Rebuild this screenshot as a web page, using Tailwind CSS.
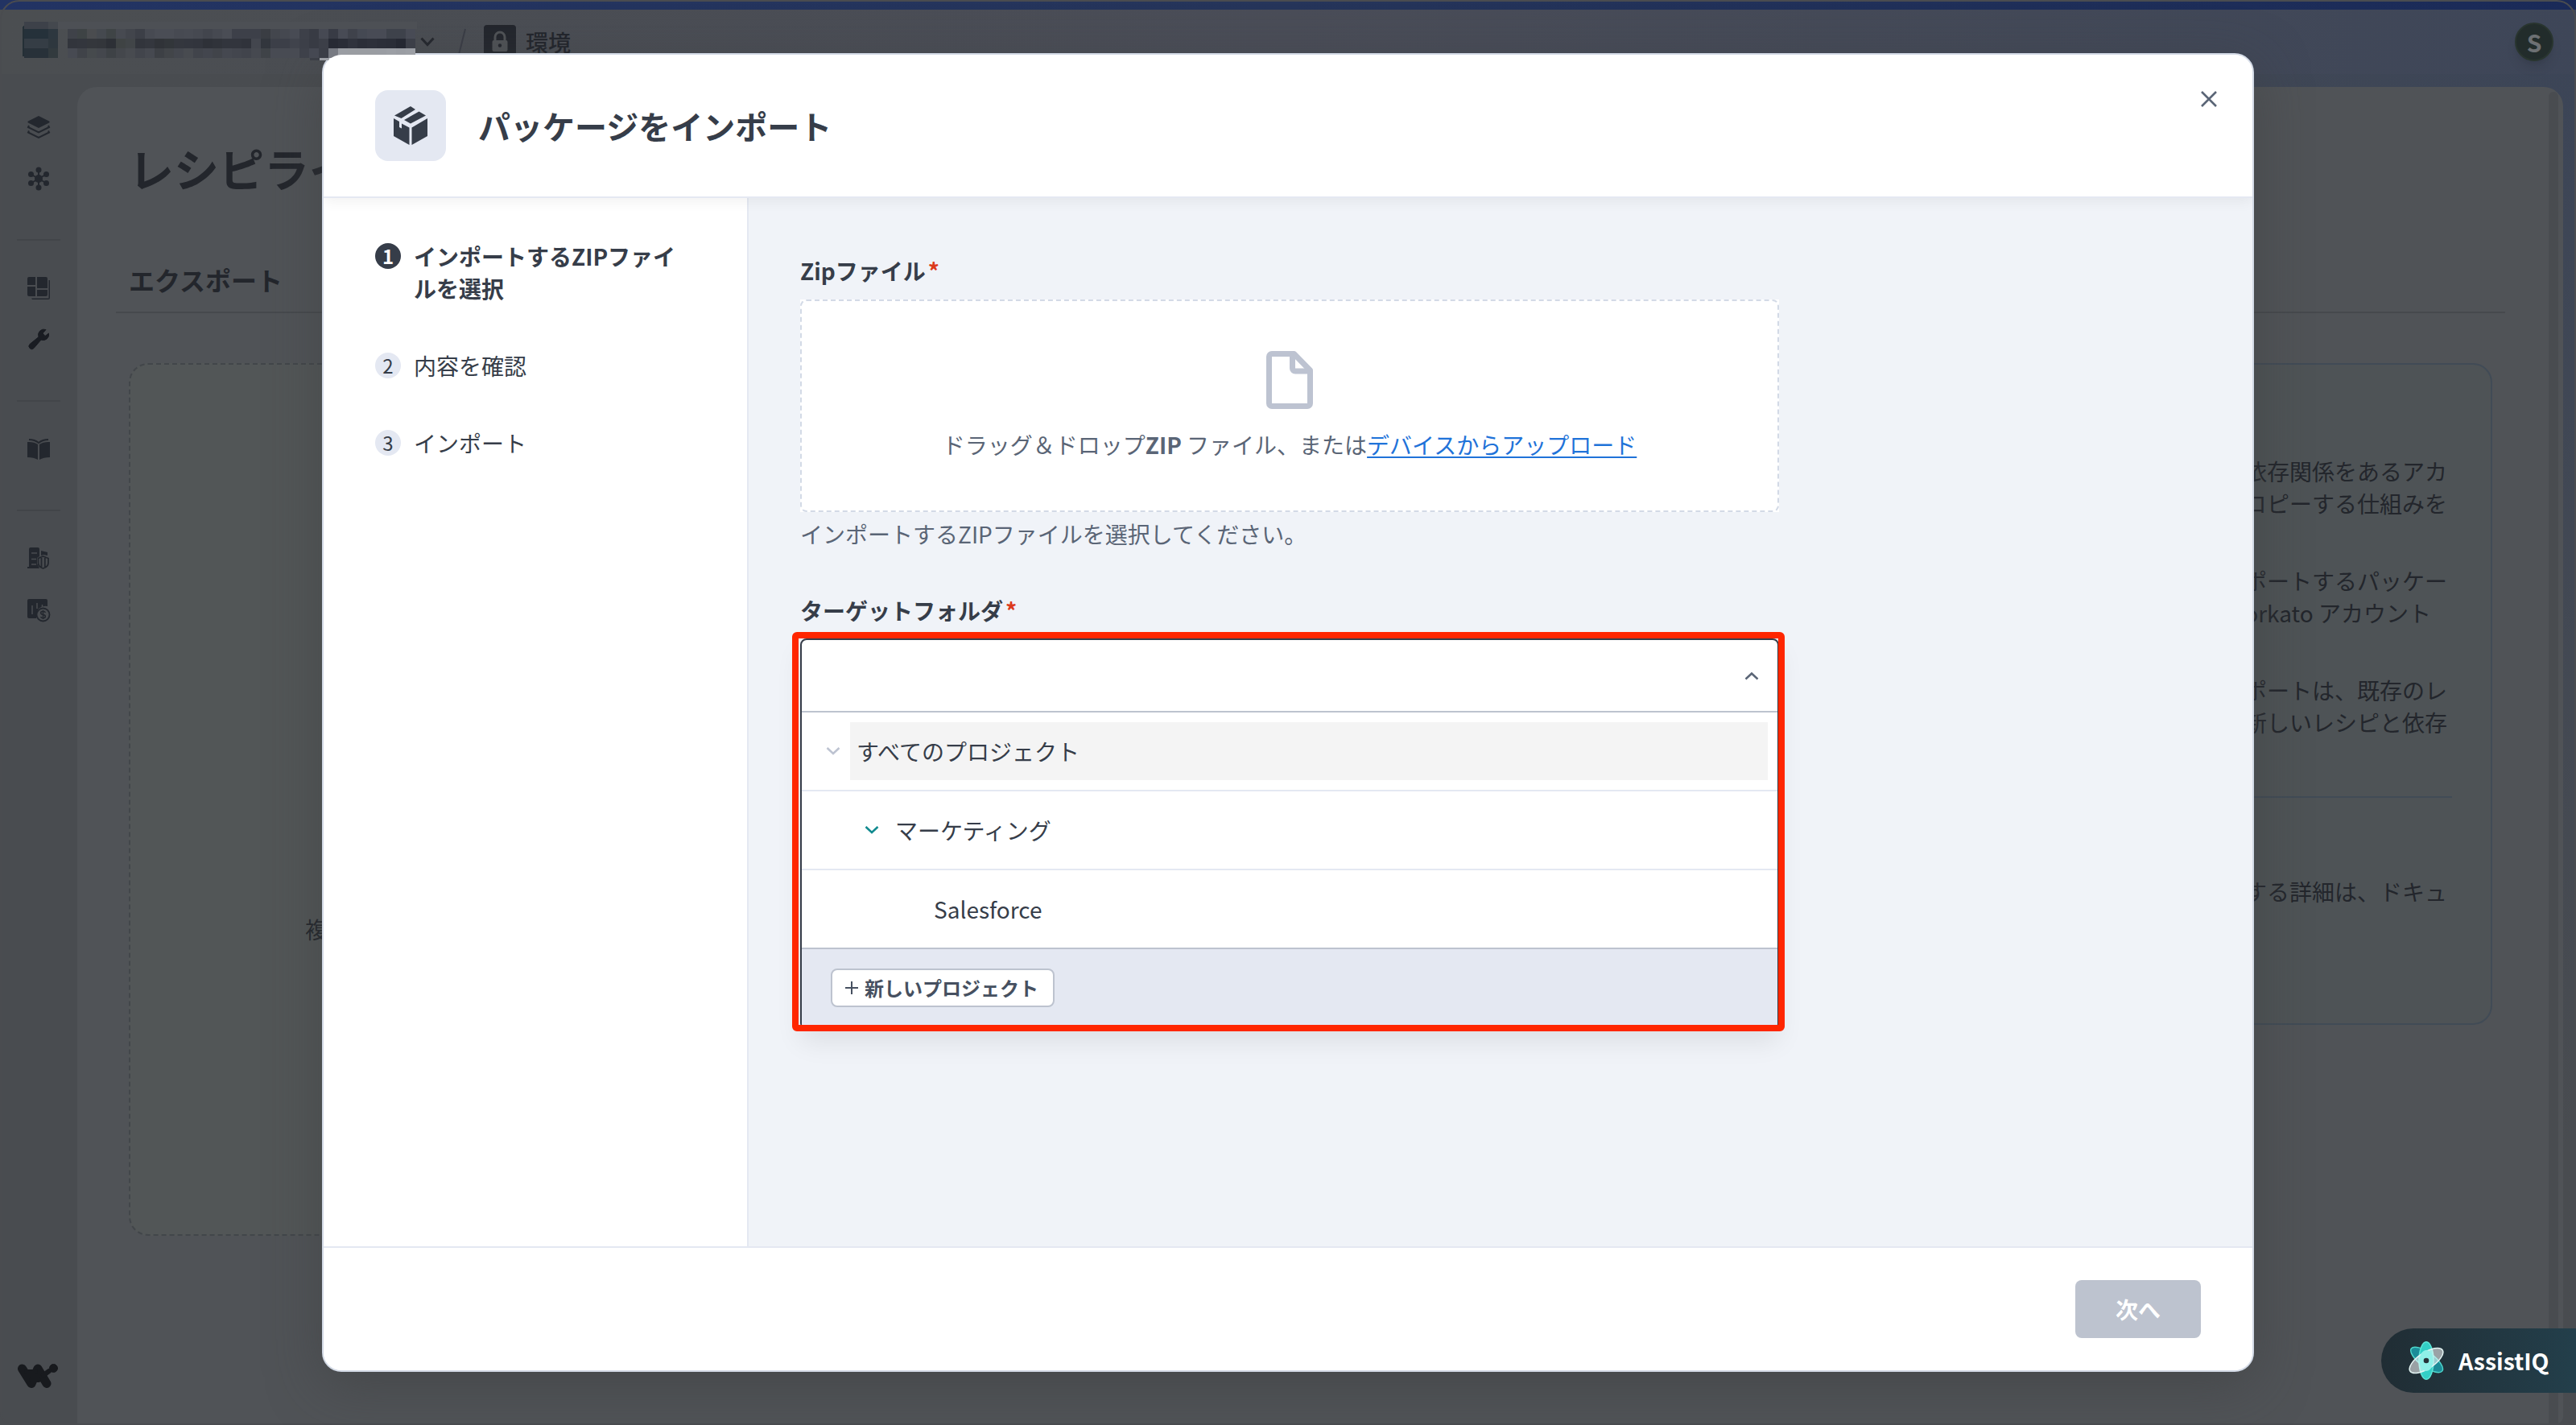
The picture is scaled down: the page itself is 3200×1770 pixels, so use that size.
<!DOCTYPE html>
<html lang="ja">
<head>
  <meta charset="UTF-8" />
  <meta name="viewport" content="width=device-width, initial-scale=1.0"/>
  <title>パッケージをインポート</title>
  <script src="https://cdn.jsdelivr.net/npm/@tailwindcss/browser@4"></script>
  <style>
    body {
      font-family: 'Noto Sans CJK JP', 'Noto Sans', sans-serif;
    }
  </style>
</head>
<body class="relative w-[3200px] h-[1770px] overflow-hidden bg-[#494c50] text-[#363d49] text-[28px] leading-[40px]">

  <!-- Page behind the dialog -->
  <div class="w-full h-full flex flex-col bg-linear-to-r from-[#494c50] from-50% to-[#3c4557]">
    <div class="h-3 shrink-0 bg-linear-to-r from-[#223363] via-[#26355a] to-[#1a2a58]"></div>

    <header class="h-20 shrink-0 flex items-center pl-[522px] pr-7 bg-linear-to-r from-[#4b4e51] via-[#4a4d58] to-[#3e4658] text-[#22252c]">
      <svg class="w-[18px] h-3" viewBox="0 0 18 12" fill="none" stroke="#24272e" stroke-width="3"><path d="M1.5 1.5 9 9.5l7.500-8"/></svg>
      <svg class="ml-7 w-3 h-10" viewBox="0 0 12 40" stroke="#3a3d46" stroke-width="2"><path d="M10 4 1 40"/></svg>
      <div class="ml-[21px] w-10 h-[42px] rounded bg-[#23262d] flex items-center justify-center">
        <svg class="w-6 h-7" viewBox="0 0 24 28"><path d="M6 12V8a6 6 0 0 1 12 0v4" fill="none" stroke="#505357" stroke-width="3"/><rect x="2.500" y="12" width="19" height="14" rx="2" fill="#505357"/><circle cx="12" cy="18.500" r="2.200" fill="#23262d"/></svg>
      </div>
      <span class="ml-3 font-medium">環境</span>
      <div class="ml-auto w-12 h-12 rounded-full bg-[#222c2b] border-2 border-[#29352f] text-[#6d7073] text-[30px] font-bold flex items-center justify-center shadow-lg">S</div>
    </header>

    <div class="flex-1 min-h-0 flex bg-linear-to-b from-transparent to-[#494c50] to-80%">
      <!-- Left navigation -->
      <nav class="w-24 shrink-0 pt-[50px] pb-[46px] flex flex-col items-center bg-[#494c50]">
        <svg class="w-8 h-8" viewBox="0 0 32 32" fill="#23272e"><path d="M16 2 29 8.500Q30.500 9.500 29 10.500L16 17 3 10.500Q1.500 9.500 3 8.500Z"/><path d="m4 14-1 2 13 6.500L29 16l-1-2M4 20.500l-1 2L16 29l13-6.500-1-2" fill="none" stroke="#23272e" stroke-width="2"/></svg>
        <svg class="mt-8 w-8 h-8" viewBox="0 0 32 32" fill="#23272e"><path d="M16 5v22M6.500 10.500l19 11M6.500 21.500l19-11" stroke="#23272e" stroke-width="2"/><circle cx="16" cy="16" r="5"/><circle cx="16" cy="5" r="3.500"/><circle cx="16" cy="27" r="3.500"/><circle cx="6.500" cy="10.500" r="3.500"/><circle cx="25.500" cy="21.500" r="3.500"/><circle cx="6.500" cy="21.500" r="3.500"/><circle cx="25.500" cy="10.500" r="3.500"/></svg>
        <div class="mt-[59px] w-[54px] h-0.5 bg-[#424549]"></div>
        <svg class="mt-[43px] w-8 h-8" viewBox="0 0 32 32" fill="#23272e"><path d="M2 4a2 2 0 0 1 2-2h8v10H2zM14 2h11a2 2 0 0 1 2 2v12H14zM2 14h10v12H4a2 2 0 0 1-2-2zM14 18h13v6a2 2 0 0 1-2 2H14zM28.500 6H30v22a2 2 0 0 1-2 2H8l-1-1.500h21.500z"/></svg>
        <svg class="mt-8 w-8 h-8" viewBox="0 0 32 32"><path d="M25 3.500 21 8l3 3.500L28.500 8A7 7 0 0 1 19 16L10 26.500a3.500 3.500 0 0 1-5-5L16 12.500A7 7 0 0 1 25 3.500Z" fill="#191c22" stroke="#191c22"/></svg>
        <div class="mt-[59px] w-[54px] h-0.5 bg-[#424549]"></div>
        <svg class="mt-11 w-8 h-8" viewBox="0 0 32 32" fill="#23272e"><path d="M2 6q8-.500 13 3v19q-5-3-13-3zM30 6q-8-.500-13 3v19q5-3 13-3z"/><path d="M4 3q7 0 12 4 5-4 12-4" fill="none" stroke="#23272e" stroke-width="1.800"/></svg>
        <div class="mt-[58px] w-[54px] h-0.5 bg-[#424549]"></div>
        <svg class="mt-[43px] w-8 h-8" viewBox="0 0 32 32" fill="#23272e"><path d="M4 26V4a2 2 0 0 1 2-2h9a2 2 0 0 1 2 2v9l-3 2v7l3 6H2v-2zM19 6l8 2v4l-5-1-3 1z"/><path d="M7 9h7M7 16.500h6M7 23h6" stroke="#494c50" stroke-width="1.500"/><path d="m21.500 13 6.500 2.500V21q0 5-6.500 7-6-2-6-7v-5.500zM19.500 15v11M23.800 15v11" fill="none" stroke="#23272e" stroke-width="1.800"/></svg>
        <svg class="mt-8 w-8 h-8" viewBox="0 0 32 32"><path d="M4 2h21a2 2 0 0 1 2 2v7q-14-2-14 15H4a2 2 0 0 1-2-2V4q0-2 2-2z" fill="#23272e"/><path d="M8 10v11M14 7v7M20.500 9v3" stroke="#494c50" stroke-width="1.500"/><circle cx="21.500" cy="21.500" r="8" fill="#494c50" stroke="#23272e" stroke-width="1.800"/><path d="M24.500 18.800q-1-1.500-3-1.500c-3.800 0-3.800 3.800 0 4.200s3.800 4.200 0 4.200q-2 0-3-1.500M21.500 16v11" fill="none" stroke="#23272e" stroke-width="1.500"/></svg>
        <svg class="mt-auto -ml-0.5 w-[50px] h-[30px]" viewBox="0 0 50 30" fill="none" stroke="#181a1e" stroke-linecap="round" stroke-linejoin="round"><path d="M5.500 6 17 24.500 25 6l11 18.500" stroke-width="11"/><path d="M33 15l12-10" stroke-width="3"/><path d="M11 10h11M17 20h9" stroke-width="6"/><ellipse cx="44.500" cy="5.500" rx="5" ry="5" fill="#181a1e" stroke-width="1"/><path d="m32 14 7-5" stroke-width="6"/></svg>
      </nav>

      <!-- Content panel -->
      <main class="relative mt-4 mb-0.5 mr-4 flex-1 rounded-tl-3xl rounded-tr-3xl rounded-br-lg bg-[#505357] text-[#23262c]">
        <h1 class="pl-16 pt-16 h-[140px] text-[56px] leading-[72px] font-bold">レシピライフ</h1>
        <div class="ml-12 mr-[72px] h-[141px] pt-[77px] pl-4 border-b-2 border-[#46494d] text-[32px] leading-[44px] font-bold">エクスポート</div>
        <div class="mt-[62px] mx-16 flex justify-between items-start">
          <div class="w-[1500px] h-[1084px] pl-[217px] flex items-center rounded-3xl border-2 border-dashed border-[#42464a] bg-[#525657]">
            <p class="pt-[322px]">複数のアセットをエクスポート</p>
          </div>
          <div class="mr-6 w-[800px] h-[822px] pt-[112px] pr-[54px] rounded-3xl border-2 border-[#414b56] bg-[#4e5356] text-right">
            <p>レシピとその依存関係をあるアカ<br>ウントからコピーする仕組みを</p>
            <p class="mt-14">インポートするパッケー<br><span class="pr-5">Workato アカウント</span></p>
            <p class="mt-14">インポートは、既存のレ<br>なく、新しいレシピと依存</p>
            <div class="mt-[72px] h-0.5 -mr-1.5 bg-[#414b56]"></div>
            <p class="mt-24">に関する詳細は、ドキュ</p>
          </div>
        </div>
        <div class="absolute right-1.5 top-1.5 bottom-0 w-3 rounded-t-full bg-[#494c50]"></div>
      </main>
    </div>
  </div>
  <!-- Window edge -->
  <div class="absolute inset-0 rounded-t-3xl rounded-b-2xl border-2 border-[#4a4c50]"></div>

  <!-- Import dialog -->
  <div class="absolute left-[400px] top-[66px] w-[2400px] h-[1638px] rounded-3xl border-2 border-[#d3dae6] bg-white overflow-hidden flex flex-col shadow-[0_16px_64px_rgba(60,62,62,0.5)]">
    <header class="relative z-10 h-[178px] shrink-0 pl-16 pr-11 flex items-center bg-white border-b-2 border-[#e4e8f2] shadow-[0_4px_16px_rgba(0,0,0,0.06)]">
      <div class="w-[88px] h-[88px] rounded-2xl bg-[#e4e8f2] flex items-center justify-center">
        <svg class="w-12 h-12" viewBox="0 0 48 48" fill="#363d49"><path d="M24 0 30 4 12.500 15 4 11.500zM34.500 6.500 43 11.500 24 21.500 16 17zM3 15l7 4v7l3 1.500v-6l9.500 5V48L3 37zM45 15v22L25.500 48V26.500z"/></svg>
      </div>
      <h2 class="ml-10 text-[40px] leading-[56px] font-bold">パッケージをインポート</h2>
      <svg class="ml-auto mb-[67px] w-5 h-5" viewBox="0 0 20 20" stroke="#5a6576" stroke-width="2.600"><path d="m1 1 18 18M19 1 1 19"/></svg>
    </header>

    <div class="flex-1 min-h-0 flex">
      <!-- Steps -->
      <ol class="w-[528px] shrink-0 border-r-2 border-[#e4e8f2] pt-[52px] pl-16 pr-16 flex flex-col gap-[56px]">
        <li class="flex gap-4 font-bold">
          <span class="mt-1 w-8 h-8 shrink-0 rounded-full bg-[#363d49] text-white text-2xl leading-8 text-center">1</span>
          <span class="w-[336px]">インポートするZIPファイルを選択</span>
        </li>
        <li class="flex gap-4">
          <span class="mt-1 w-8 h-8 shrink-0 rounded-full bg-[#e4e8f2] text-2xl leading-8 text-center">2</span>
          <span>内容を確認</span>
        </li>
        <li class="flex gap-4">
          <span class="mt-1 w-8 h-8 shrink-0 rounded-full bg-[#e4e8f2] text-2xl leading-8 text-center">3</span>
          <span>インポート</span>
        </li>
      </ol>

      <!-- Form -->
      <section class="flex-1 bg-[#f0f3f8] pt-[70px] pl-16">
        <label class="block font-bold">Zipファイル<span class="ml-[3px] text-[#dc3a1c]">*</span></label>
        <div class="mt-4 w-[1216px] bg-white">
          <div class="h-[264px] rounded-lg border-2 border-dashed border-[#d3dae6] flex flex-col items-center pt-[62px] text-[#5a6576]">
            <svg class="w-[58px] h-[72px]" viewBox="0 0 58 72" fill="none" stroke="#bdc3d1" stroke-width="7" stroke-linejoin="round"><path d="M7 3.500h27.500L54.500 24v41a3.500 3.500 0 0 1-3.500 3.500H7A3.500 3.500 0 0 1 3.500 65V7A3.500 3.500 0 0 1 7 3.500Z"/><path d="M32.500 4v17.500a3.500 3.500 0 0 0 3.500 3.500h18"/></svg>
            <p class="mt-6 whitespace-nowrap">ドラッグ＆ドロップ<b>ZIP</b> ファイル、または<a class="text-[#1f73d9] underline underline-offset-[3px] decoration-2">デバイスからアップロード</a></p>
          </div>
        </div>
        <p class="mt-[7px] text-[#5a6576]">インポートするZIPファイルを選択してください。</p>

        <label class="mt-[55px] block font-bold">ターゲットフォルダ<span class="ml-[3px] text-[#dc3a1c]">*</span></label>
        <div class="relative mt-[15px] w-[1216px] h-[486px] rounded-lg border-2 border-[#363d49] bg-white flex flex-col shadow-[0_16px_32px_rgba(0,0,0,0.08)]">
          <div class="h-22 shrink-0 flex items-center justify-end pr-[23px]">
            <svg class="mt-0.5 w-[18px] h-3" viewBox="0 0 18 12" fill="none" stroke="#5a6576" stroke-width="2.500"><path d="m1.500 9.500 7.500-7 7.500 7"/></svg>
          </div>
          <div class="h-[100px] shrink-0 flex items-center pl-[30px] pr-3 border-y-2 border-t-[#bdc3cf] border-b-[#e4e8f2]">
            <svg class="w-[18px] h-3" viewBox="0 0 18 12" fill="none" stroke="#bdc3d1" stroke-width="2.500"><path d="m1.500 2 7.500 7 7.500-7"/></svg>
            <span class="ml-3 flex-1 h-[72px] leading-[72px] pl-2 bg-[#f4f4f4]">すべてのプロジェクト</span>
          </div>
          <div class="h-[98px] shrink-0 flex items-center pl-[78px] border-b-2 border-[#e4e8f2]">
            <svg class="w-[18px] h-3" viewBox="0 0 18 12" fill="none" stroke="#118a8f" stroke-width="2.500"><path d="m1.500 2 7.500 7 7.500-7"/></svg>
            <span class="ml-5">マーケティング</span>
          </div>
          <div class="h-[98px] shrink-0 flex items-center pl-[164px] border-b-2 border-[#bdc3cf]">Salesforce</div>
          <div class="flex-1 rounded-b-md bg-[#e4e8f2] pt-6 pl-9">
            <button class="h-12 w-[278px] pl-4 flex items-center rounded-lg border-2 border-[#bdc3cf] bg-white text-2xl font-bold text-[#465060]">
              <svg class="w-4 h-4" viewBox="0 0 16 16" stroke="#465060" stroke-width="2"><path d="M8 0v16M0 8h16"/></svg>
              <span class="ml-2">新しいプロジェクト</span>
            </button>
          </div>
          <!-- Red callout frame -->
          <div class="absolute -left-3 -right-[9px] -top-[10px] -bottom-1 rounded-md border-8 border-[#ff2600]"></div>
        </div>
      </section>
    </div>

    <footer class="h-[154px] shrink-0 border-t-2 border-[#e4e8f2] pr-16 flex items-center justify-end bg-white">
      <button class="w-[156px] h-[72px] rounded-lg bg-[#bdc3cf] text-white font-bold">次へ</button>
    </footer>
  </div>

  <!-- Masked workspace name -->
  <svg class="absolute left-0 top-0 w-[522px] h-[76px]" id="mask" viewBox="0 0 522 76" shape-rendering="crispEdges">
    <rect x="28" y="32" width="4" height="38" rx="2" fill="#242f36"/>
    <rect x="30" y="27" width="30" height="9" fill="#3d4149"/><rect x="60" y="27" width="12" height="9" fill="#44484e"/>
    <rect x="30" y="36" width="30" height="12" fill="#25313a"/><rect x="60" y="36" width="12" height="12" fill="#2d373f"/>
    <rect x="30" y="48" width="30" height="12" fill="#353d45"/><rect x="60" y="48" width="12" height="12" fill="#2e373e"/>
    <rect x="30" y="60" width="30" height="12" fill="#283139"/><rect x="60" y="60" width="12" height="12" fill="#323a3e"/>
    <rect x="72" y="27" width="446" height="9" fill="#4d5055"/>
    <rect x="385" y="72" width="12" height="3" fill="#3b3e46"/><rect x="397" y="72" width="12" height="3" fill="#9da0a6"/>
  </svg>

  <!-- Assistant tab -->
  <div class="absolute right-0 top-[1650px] w-[242px] h-20 rounded-l-full pl-[34px] flex items-center bg-linear-to-r from-[#202d34] to-[#233f4b] text-white font-bold">
    <svg class="w-11 h-12" viewBox="0 0 44 48" stroke-width="1.500">
      <ellipse cx="22" cy="24" rx="25" ry="9.500" transform="rotate(36 22 24) translate(1 0) scale(.950)" fill="#1c8c98" stroke="#4fd8cc"/>
      <ellipse cx="22" cy="24" rx="9" ry="23.200" fill="#33cfc6" stroke="#5ee6d8"/>
      <ellipse cx="22" cy="24" rx="24" ry="10" transform="rotate(-33 22 24)" fill="#ffffff" fill-opacity=".55" stroke="#e4f5f4"/>
      <ellipse cx="22" cy="24" rx="8.500" ry="13" fill="#8ff0e8" stroke="none"/>
      <circle cx="22" cy="24" r="3.300" fill="#263238"/>
    </svg>
    <span class="ml-[18px] text-[28.5px]">AssistIQ</span>
  </div>

  <script>
    // 12px mosaic cells, three rows starting at (84, 36)
    const rows = [
      '3f4249 3e4345 4a4c4f 45494f 3f4446 474a51 42454c 3c3f47 474a52 4a4d55 4a4d55 474a52 484b53 464951 42454d 464951 4a4d55 3d4049 3d4049 3d4049 3a3d43 43464d 454850 484b54 3d4049 383b44 464953 383b45 484b55 3f424b 454953 484b55 484b55 3e424b 3e424b 484b55',
      '32353c 33363d 34373c 33363b 2d3036 3f4344 414548 32353c 34373e 303338 32363a 34373e 33363e 32353d 2e3138 30333a 32353d 32353d 30333b 43464e 32363d 3c3f48 3c3f48 40434c 3c3f48 383b44 3c3f48 272a34 2a2d37 30333d 2b2e38 2d303a 2b2e38 2a2d37 252832 3c3f48',
      '474a52 404349 464a4d 44474d 3e4246 44474c 484b50 42454c 464950 3d4045 424549 44474e 484b50 41444b 43464e 41444a 454850 43464e 41444c 464950 3f4348 484b53 484b53 484b53 3e414a 454852 3b3e47 777a82 9a9da3 9a9da2 9a9da2 9a9da2 9a9da3 9c9fa5 9a9da3 9c9fa5'
    ];
    const mask = document.getElementById('mask');
    rows.forEach((row, y) => {
      row.split(' ').forEach((color, x) => {
        const cell = document.createElementNS('http://www.w3.org/2000/svg', 'rect');
        cell.setAttribute('x', 84 + x * 12);
        cell.setAttribute('y', 36 + y * 12);
        cell.setAttribute('width', Math.min(12, 518 - 84 - x * 12));
        cell.setAttribute('height', 12);
        cell.setAttribute('fill', '#' + color);
        mask.appendChild(cell);
      });
    });
  </script>

</body>
</html>
